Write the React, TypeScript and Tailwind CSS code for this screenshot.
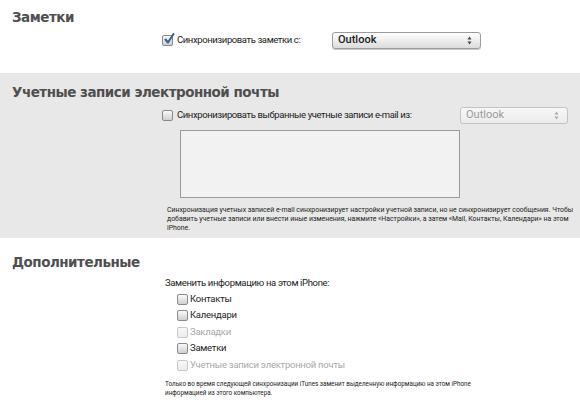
import React from "react";

const FONT = { fontFamily: 'Roboto, "Liberation Sans", sans-serif' };

function Box({ checked = false, disabled = false }: { checked?: boolean; disabled?: boolean }) {
  return (
    <span
      className={`relative inline-block h-[11px] w-[11px] shrink-0 rounded-[2px] border ${
        disabled
          ? "border-[#c8c8c8] bg-gradient-to-b from-[#f8f8f8] to-[#ececec]"
          : "border-[#8a8a8a] bg-gradient-to-b from-[#fafafa] to-[#cfcfcf]"
      }`}
    >
      {checked && (
        <svg className="absolute -top-[3px] left-[1px]" width="11" height="12" viewBox="0 0 11 12">
          <path d="M1.5 6.5 L4 9.5 L9.5 1" fill="none" stroke="#3b5a9a" strokeWidth="2" strokeLinecap="round" strokeLinejoin="round" />
        </svg>
      )}
    </span>
  );
}

function Select({ disabled = false, className = "" }: { disabled?: boolean; className?: string }) {
  return (
    <div
      className={`flex h-[17px] items-center justify-between rounded-[3px] border pl-[5px] pr-[8px] text-[11px] ${
        disabled
          ? "border-[#c4c4c4] bg-gradient-to-b from-[#f7f7f7] to-[#ececec] text-[#9a9a9a]"
          : "border-[#9c9c9c] bg-gradient-to-b from-white to-[#dcdcdc] font-medium text-[#222] shadow-[0_1px_0_#c8c8c8]"
      } ${className}`}
    >
      <span>Outlook</span>
      <svg width="5" height="9" viewBox="0 0 5 9">
        <path d="M2.5 0.5 L4.5 3.5 L0.5 3.5 Z M2.5 8.5 L4.5 5.5 L0.5 5.5 Z" fill={disabled ? "#aaa" : "#444"} />
      </svg>
    </div>
  );
}

function Heading({ children }: { children: React.ReactNode }) {
  return (
    <h2
      className="pl-[12px] text-[13.5px] font-bold leading-none tracking-[-0.5px] text-[#4f4f4f]"
      style={{ fontFamily: '"DejaVu Sans", sans-serif' }}
    >
      {children}
    </h2>
  );
}

function Item({ label, disabled = false }: { label: string; disabled?: boolean }) {
  return (
    <div
      className={`flex h-[16.5px] items-center gap-[2px] text-[9.5px] tracking-[-0.25px] ${
        disabled ? "text-[#a8a8a8]" : "text-[#222]"
      }`}
    >
      <Box disabled={disabled} />
      <span>{label}</span>
    </div>
  );
}

export default function App() {
  return (
    <div className="h-[404px] w-[580px] overflow-hidden bg-white" style={FONT}>
      <section className="h-[73px] pt-[11px]">
        <Heading>Заметки</Heading>
        <div className="mt-[7px] flex items-center pl-[162px]">
          <Box checked />
          <span className="ml-[4px] w-[155px] whitespace-nowrap text-[9.5px] tracking-[-0.4px] text-[#222]">
            Синхронизировать заметки с:
          </span>
          <Select className="w-[149px]" />
        </div>
      </section>

      <section className="h-[165px] bg-[#e8e8e8] pt-[13px]">
        <Heading>Учетные записи электронной почты</Heading>
        <div className="mt-[7px] flex items-center pl-[162px]">
          <Box />
          <span className="ml-[4px] w-[283px] whitespace-nowrap text-[9.5px] tracking-[-0.4px] text-[#222]">
            Синхронизировать выбранные учетные записи e-mail из:
          </span>
          <Select disabled className="w-[108px]" />
        </div>
        <div className="ml-[180px] mt-[6px] h-[68px] w-[280px] border border-[#9a9a9a] bg-[#f2f2f2]" />
        <p className="ml-[167px] mt-[8px] whitespace-nowrap text-[6.9px] leading-[9px] text-[#222]">
          Синхронизация учетных записей e-mail синхронизирует настройки учетной записи, но не синхронизирует сообщения. Чтобы
          <br />
          добавить учетные записи или внести иные изменения, нажмите «Настройки», а затем «Mail, Контакты, Календари» на этом
          <br />
          iPhone.
        </p>
      </section>

      <section className="pt-[18px]">
        <Heading>Дополнительные</Heading>
        <div className="pl-[165px] pt-[6px]">
          <div className="text-[9.5px] tracking-[-0.35px] text-[#222]">Заменить информацию на этом iPhone:</div>
          <div className="mt-[1px] pl-[12px]">
            <Item label="Контакты" />
            <Item label="Календари" />
            <Item label="Закладки" disabled />
            <Item label="Заметки" />
            <Item label="Учетные записи электронной почты" disabled />
          </div>
          <p className="mt-[7px] whitespace-nowrap text-[6.3px] leading-[9px] text-[#222]">
            Только во время следующей синхронизации iTunes заменит выделенную информацию на этом iPhone
            <br />
            информацией из этого компьютера.
          </p>
        </div>
      </section>
    </div>
  );
}
